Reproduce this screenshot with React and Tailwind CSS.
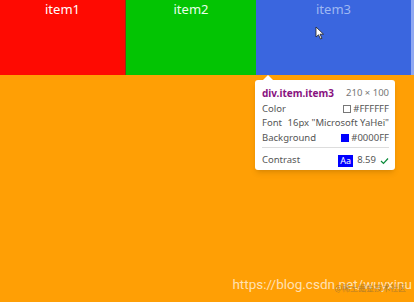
import React from "react";

export default function App() {
  return (
    <div className="relative w-[414px] h-[302px] bg-[#ff9f05] overflow-hidden" style={{ fontFamily: '"Noto Sans", "Liberation Sans", sans-serif' }}>
      <div className="flex h-[75px]">
        <div className="w-[126px] bg-[#fe0a02] flex justify-center border-r border-[#8a3a10]">
          <span className="text-white text-[13px] leading-[18px]">item1</span>
        </div>
        <div className="w-[130px] bg-[#03c403] flex justify-center">
          <span className="text-[#eaffea] text-[13px] leading-[18px]">item2</span>
        </div>
        <div className="w-[155px] bg-[#3a66df] flex justify-center">
          <span className="text-[#9fb8f2] text-[13px] leading-[18px]">item3</span>
        </div>
        <div className="w-[3px] bg-[#8fa8f2]" />
      </div>

      {/* cursor */}
      <svg className="absolute left-[315px] top-[26px]" width="10" height="14" viewBox="0 0 10 14">
        <path d="M1 1 L1 11 L3.5 8.8 L5.5 13 L7 12.3 L5 8.2 L8.5 8.2 Z" fill="#ffffff" stroke="#222" strokeWidth="0.8" />
      </svg>

      {/* tooltip */}
      <div className="absolute left-[255px] top-[80px] w-[140px] bg-white rounded-[3px] shadow-md pl-[7px] pr-[6px] pt-[6px] pb-[2px] text-[9.5px] text-[#333]">
        <div className="absolute -top-[5px] left-[8px] w-0 h-0 border-l-[5px] border-r-[5px] border-b-[5px] border-l-transparent border-r-transparent border-b-white" />
        <div className="flex justify-between items-center h-[14px]">
          <span className="text-[#881280] font-bold text-[10px]">div.item.item3</span>
          <span className="text-[#777]">210 × 100</span>
        </div>
        <div className="flex justify-between items-center h-[14px] mt-[2px]">
          <span className="text-[#555]">Color</span>
          <span className="flex items-center gap-[2px] text-[#555]"><span className="inline-block w-[8px] h-[8px] border border-[#777] bg-white" />#FFFFFF</span>
        </div>
        <div className="flex justify-between items-center h-[15px]">
          <span className="text-[#555]">Font</span>
          <span className="text-[#555]">16px "Microsoft YaHei"</span>
        </div>
        <div className="flex justify-between items-center h-[14px]">
          <span className="text-[#555]">Background</span>
          <span className="flex items-center gap-[2px] text-[#555]"><span className="inline-block w-[8px] h-[8px] bg-[#0000ff]" />#0000FF</span>
        </div>
        <div className="border-t border-[#ddd] mt-[2px]" />
        <div className="flex justify-between items-center h-[15px] mt-[5px]">
          <span className="text-[#555]">Contrast</span>
          <span className="flex items-center gap-[4px] text-[#555]">
            <span className="bg-[#0000ff] text-white text-[9px] leading-[12px] px-[2px]">Aa</span>
            <span>8.59</span>
            <svg width="9" height="8" viewBox="0 0 9 8"><path d="M1 4 L3.5 6.5 L8 1.5" fill="none" stroke="#0a8a3a" strokeWidth="1.2" /></svg>
          </span>
        </div>
      </div>

      {/* watermark */}
      <div className="absolute right-[2px] top-[274px] text-[13.5px] text-white/70" style={{ fontFamily: 'Roboto, "Noto Sans", sans-serif' }}>
        https://blog.csdn.net/wuyxinu
      </div>
      <div className="absolute right-[8px] top-[283px] text-[8px] leading-[10px] text-[#8a6a40]/70" style={{ fontFamily: '"Noto Sans CJK SC", sans-serif' }}>
        @稀土掘金技术社区
      </div>
    </div>
  );
}
